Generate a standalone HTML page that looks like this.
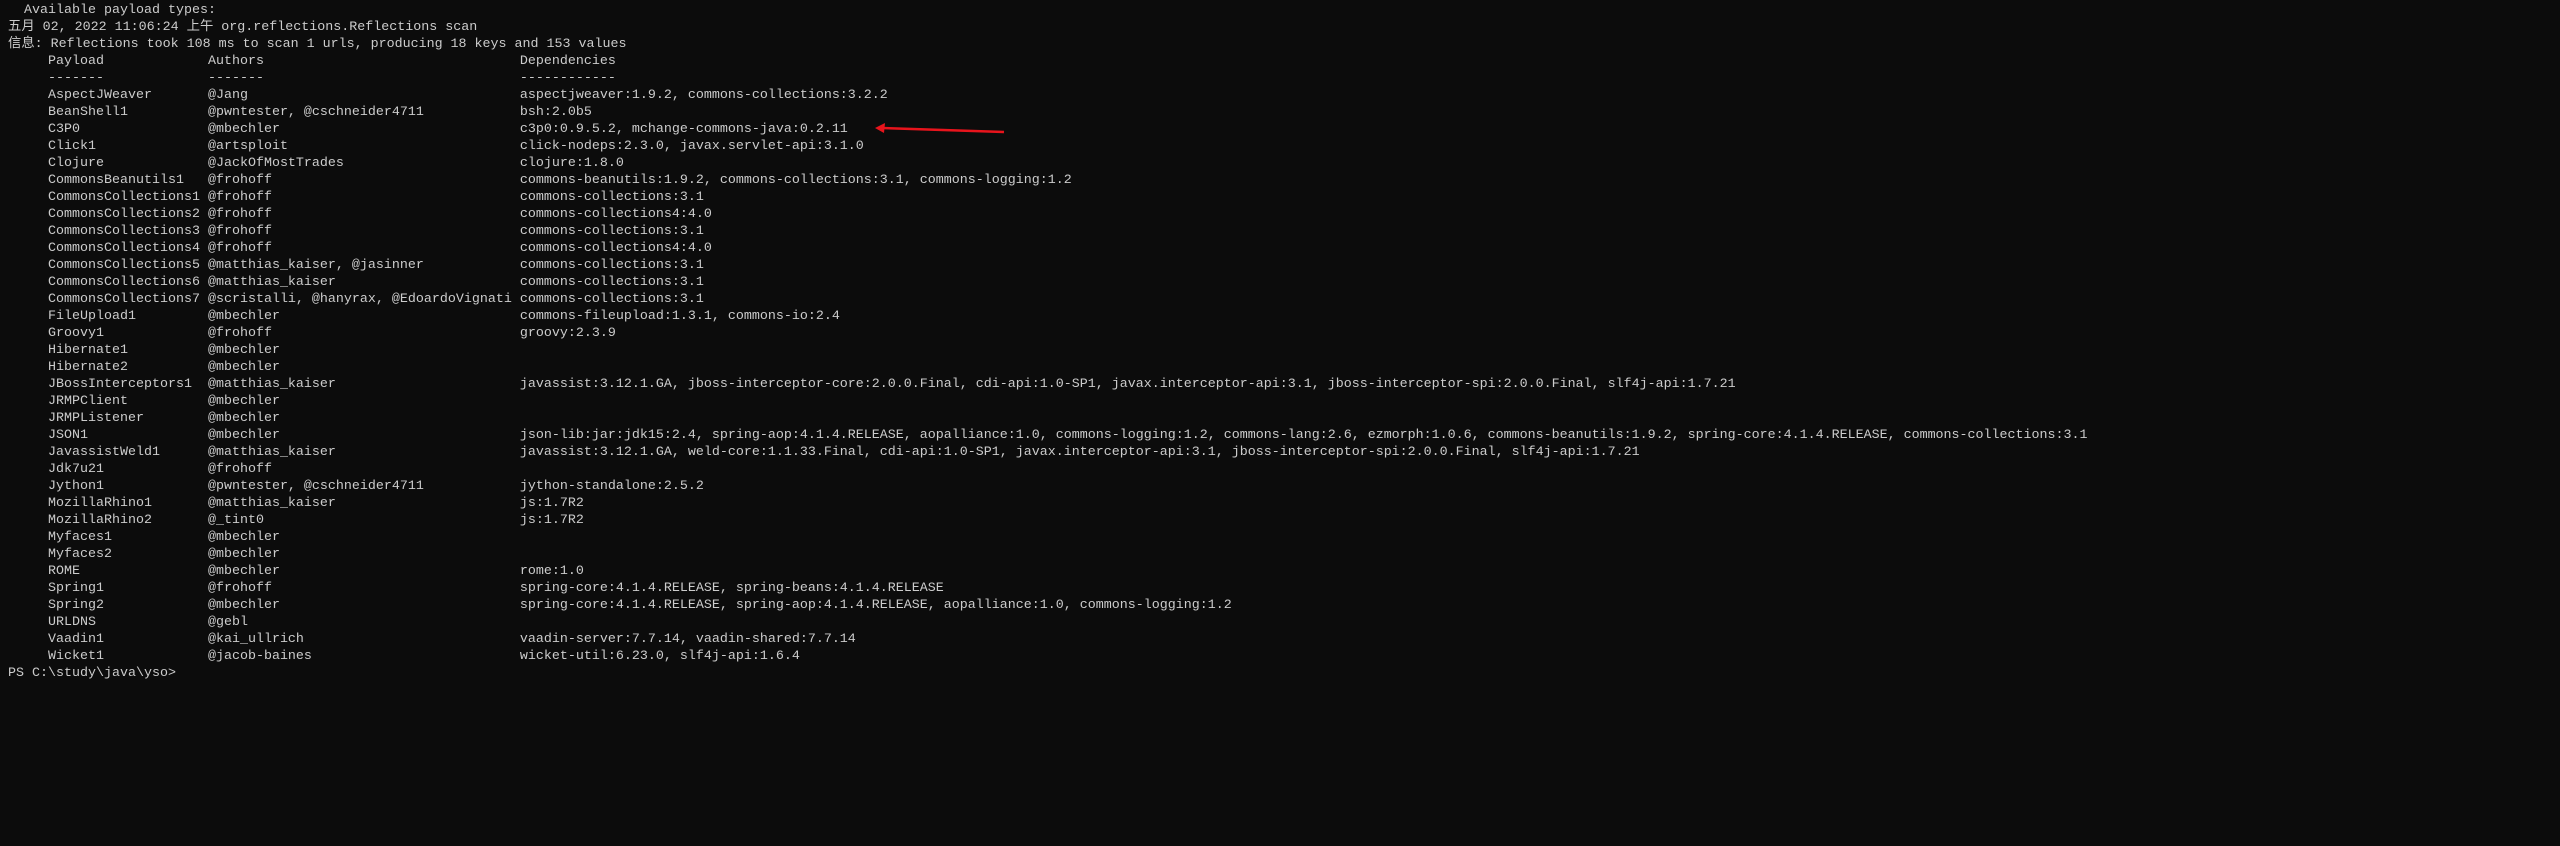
<!DOCTYPE html>
<html><head><meta charset="utf-8"><style>
html,body{margin:0;padding:0;background:#0c0c0c;width:2560px;height:846px;overflow:hidden}
pre{margin:0;position:absolute;left:8px;top:2px;font-family:"Liberation Mono","Noto Sans CJK SC",monospace;font-size:13.33px;line-height:17px;color:#cccccc;white-space:pre}
</style></head><body>
<pre>  Available payload types:
五月 02, 2022 11:06:24 上午 org.reflections.Reflections scan
信息: Reflections took 108 ms to scan 1 urls, producing 18 keys and 153 values
     Payload             Authors                                Dependencies
     -------             -------                                ------------
     AspectJWeaver       @Jang                                  aspectjweaver:1.9.2, commons-collections:3.2.2
     BeanShell1          @pwntester, @cschneider4711            bsh:2.0b5
     C3P0                @mbechler                              c3p0:0.9.5.2, mchange-commons-java:0.2.11
     Click1              @artsploit                             click-nodeps:2.3.0, javax.servlet-api:3.1.0
     Clojure             @JackOfMostTrades                      clojure:1.8.0
     CommonsBeanutils1   @frohoff                               commons-beanutils:1.9.2, commons-collections:3.1, commons-logging:1.2
     CommonsCollections1 @frohoff                               commons-collections:3.1
     CommonsCollections2 @frohoff                               commons-collections4:4.0
     CommonsCollections3 @frohoff                               commons-collections:3.1
     CommonsCollections4 @frohoff                               commons-collections4:4.0
     CommonsCollections5 @matthias_kaiser, @jasinner            commons-collections:3.1
     CommonsCollections6 @matthias_kaiser                       commons-collections:3.1
     CommonsCollections7 @scristalli, @hanyrax, @EdoardoVignati commons-collections:3.1
     FileUpload1         @mbechler                              commons-fileupload:1.3.1, commons-io:2.4
     Groovy1             @frohoff                               groovy:2.3.9
     Hibernate1          @mbechler
     Hibernate2          @mbechler
     JBossInterceptors1  @matthias_kaiser                       javassist:3.12.1.GA, jboss-interceptor-core:2.0.0.Final, cdi-api:1.0-SP1, javax.interceptor-api:3.1, jboss-interceptor-spi:2.0.0.Final, slf4j-api:1.7.21
     JRMPClient          @mbechler
     JRMPListener        @mbechler
     JSON1               @mbechler                              json-lib:jar:jdk15:2.4, spring-aop:4.1.4.RELEASE, aopalliance:1.0, commons-logging:1.2, commons-lang:2.6, ezmorph:1.0.6, commons-beanutils:1.9.2, spring-core:4.1.4.RELEASE, commons-collections:3.1
     JavassistWeld1      @matthias_kaiser                       javassist:3.12.1.GA, weld-core:1.1.33.Final, cdi-api:1.0-SP1, javax.interceptor-api:3.1, jboss-interceptor-spi:2.0.0.Final, slf4j-api:1.7.21
     Jdk7u21             @frohoff
     Jython1             @pwntester, @cschneider4711            jython-standalone:2.5.2
     MozillaRhino1       @matthias_kaiser                       js:1.7R2
     MozillaRhino2       @_tint0                                js:1.7R2
     Myfaces1            @mbechler
     Myfaces2            @mbechler
     ROME                @mbechler                              rome:1.0
     Spring1             @frohoff                               spring-core:4.1.4.RELEASE, spring-beans:4.1.4.RELEASE
     Spring2             @mbechler                              spring-core:4.1.4.RELEASE, spring-aop:4.1.4.RELEASE, aopalliance:1.0, commons-logging:1.2
     URLDNS              @gebl
     Vaadin1             @kai_ullrich                           vaadin-server:7.7.14, vaadin-shared:7.7.14
     Wicket1             @jacob-baines                          wicket-util:6.23.0, slf4j-api:1.6.4
PS C:\study\java\yso&gt;</pre>
<svg style="position:absolute;left:0;top:0" width="2560" height="846">
<line x1="1004" y1="132" x2="882" y2="128" stroke="#e8141c" stroke-width="2.5"/>
<polygon points="875,128 885,123 884,133" fill="#e8141c"/>
</svg>
</body></html>
